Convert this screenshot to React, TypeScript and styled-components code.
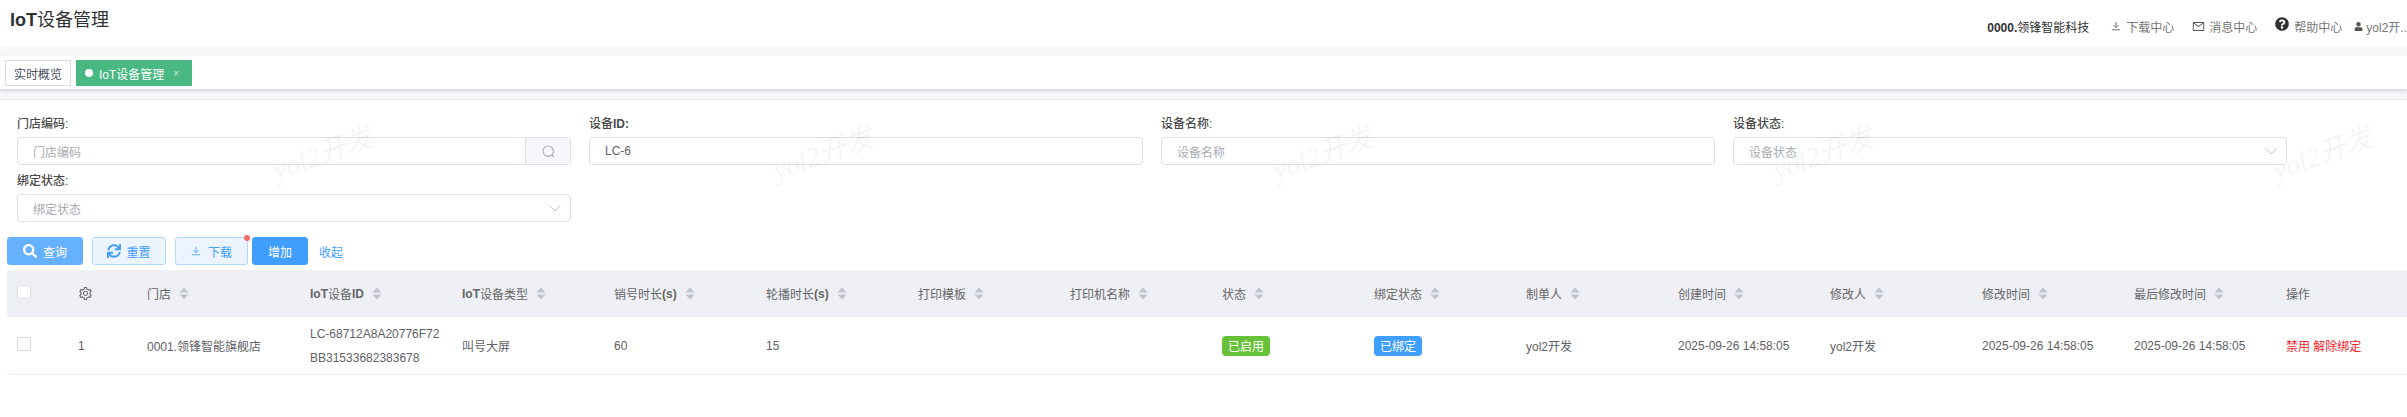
import React from "react";
import styled, { createGlobalStyle } from "styled-components";
import { FaSearch, FaSync, FaUser, FaQuestionCircle } from "react-icons/fa";
import { AiOutlineMail, AiOutlineSetting } from "react-icons/ai";

const Global = createGlobalStyle`
  html, body { margin: 0; padding: 0; background: #fff; }
  body { width: 2407px; height: 417px; overflow: hidden; font-family: "Liberation Sans", "Noto Sans CJK SC", sans-serif; font-size: 12px; color: #606266; }
  * { box-sizing: border-box; }
`;

const Page = styled.div`position: relative; width: 2407px; height: 417px; overflow: hidden;`;

const TopBar = styled.header`display: flex; align-items: center; justify-content: space-between; height: 46px; padding: 0 0 6px 10px; background: #fff;`;
const Title = styled.h1`margin: 0; font-size: 18px; font-weight: 400; color: #303133; line-height: 28px; b { font-weight: 700; }`;
const TopRight = styled.nav`display: flex; align-items: center; font-size: 12px; color: #777; padding-top: 12px; white-space: nowrap;`;
const Company = styled.span`color: #333; margin-right: 22px; b { font-weight: 700; }`;
const TopLink = styled.span<{ $gap: number; $iconGap: number }>`display: inline-flex; align-items: center; gap: ${p => p.$iconGap}px; margin-right: ${p => p.$gap}px; svg { color: #555; flex: none; }`;
const HelpIcon = styled(FaQuestionCircle)`margin-top: -4px; && { color: #303133; }`;

const TabStrip = styled.div`height: 10px; background: #f7f8fa;`;
const TabBar = styled.div`display: flex; gap: 5px; height: 33px; padding: 4px 5px 3px; background: #fff; box-shadow: 0 2px 4px rgba(0,21,41,.16); position: relative;`;
const Tab = styled.div`display: flex; align-items: center; height: 26px; padding: 0 8px; border: 1px solid #d8dce5; color: #495060;`;
const ActiveTab = styled.div`display: flex; align-items: center; height: 26px; padding: 0 0 0 9px; width: 116px; background: #4ab883; color: #fff;`;
const Dot = styled.i`width: 8px; height: 8px; border-radius: 50%; background: #fff; margin-right: 6px;`;
const Close = styled.span`margin-left: 9px; font-size: 10px; opacity: .7;`;
const Gap = styled.div`height: 11px; background: #f7f8fa; border-bottom: 1px solid #e6ebf5;`;

const Form = styled.form`display: grid; grid-template-columns: repeat(4, 554px); column-gap: 18px; padding: 16px 0 0 17px;`;
const Field = styled.div`height: 57px; display: flex; flex-direction: column;`;
const Label = styled.label`height: 21px; line-height: 14px; margin-top: 1px; margin-bottom: -1px; color: #4a4a4a; font-weight: 500; b { font-weight: 700; }`;
const Box = styled.div`display: flex; align-items: center; justify-content: space-between; height: 28px; border: 1px solid #dcdfe6; border-radius: 4px; background: #fff; overflow: hidden;`;
const Value = styled.span<{ $placeholder?: boolean }>`padding-left: 15px; color: ${p => (p.$placeholder ? "#a8abb2" : "#606266")};`;
const Addon = styled.span`display: flex; align-items: center; justify-content: center; width: 45px; height: 100%; background: #f5f7fa; border-left: 1px solid #dcdfe6; color: #909399;`;
const Chevron = styled.svg`margin-right: 9px; flex: none;`;

const Actions = styled.div`display: flex; align-items: center; height: 28px; margin-top: 7px; padding-left: 7px;`;
const Btn = styled.button<{ $w: number; $kind: "solid" | "light" | "primary"; $mr: number; $gap?: number }>`
  position: relative; display: inline-flex; align-items: center; justify-content: center; gap: ${p => p.$gap ?? 6}px;
  width: ${p => p.$w}px; height: 28px; margin-right: ${p => p.$mr}px; padding: 0; border-radius: 3px; font: inherit; font-size: 12px;
  background: ${p => (p.$kind === "solid" ? "#66b1ff" : p.$kind === "primary" ? "#409eff" : "#ecf5ff")};
  border: 1px solid ${p => (p.$kind === "light" ? "#b3d8ff" : p.$kind === "solid" ? "#66b1ff" : "#409eff")};
  color: ${p => (p.$kind === "light" ? "#409eff" : "#fff")};
`;
const Badge = styled.i`position: absolute; top: -3px; right: -3px; width: 6px; height: 6px; border-radius: 50%; background: #f56c6c;`;
const TextLink = styled.span`margin-left: 3px; color: #409eff;`;

const Table = styled.div`margin: 5px 0 0 7px; width: 2400px;`;
const Row = styled.div<{ $head?: boolean }>`
  display: grid; grid-template-columns: 61px 69px 163px repeat(13, 152px) 124px; align-items: center;
  height: ${p => (p.$head ? "47px" : "58px")};
  background: ${p => (p.$head ? "#eef0f5" : "#fff")};
  border-bottom: ${p => (p.$head ? "none" : "1px solid #ebeef5")};
  color: ${p => (p.$head ? "#666" : "#606266")};
`;
const Cell = styled.div`display: flex; align-items: center; padding-left: 10px; min-width: 0; white-space: nowrap; b { font-weight: 700; }`;
const Check = styled.span`display: block; width: 14px; height: 14px; border: 1px solid #dcdfe6; border-radius: 2px; background: #fff; margin-top: -3px;`;
const Stack = styled.div`display: flex; flex-direction: column; gap: 8px; line-height: 16px;`;
const Tag = styled.span<{ $color: string }>`display: inline-flex; align-items: center; justify-content: center; width: 48px; height: 20px; border-radius: 4px; background: ${p => p.$color}; color: #fff;`;
const Danger = styled.span`color: #f5222d;`;
const SortIcon = styled.svg`margin-left: 8px; flex: none;`;

const Watermark = styled.div<{ $x: number }>`
  position: absolute; top: 139px; left: ${p => p.$x}px; pointer-events: none;
  font-family: "Liberation Serif", "Noto Sans CJK SC", serif; font-size: 28px; font-style: italic; line-height: 30px; white-space: nowrap;
  color: rgba(130,130,140,.09); transform: rotate(-20deg);
`;

const Sort = () => (
  <SortIcon width="10" height="13" viewBox="0 0 10 13" aria-hidden="true">
    <path d="M5 0.5 L9.5 5.5 H0.5 Z M0.5 7.5 H9.5 L5 12.5 Z" fill="#c0c4cc" />
  </SortIcon>
);

const DownloadIcon = ({ size }: { size: number }) => (
  <svg width={size} height={size} viewBox="0 0 12 12" fill="none" stroke="currentColor" strokeWidth="1" aria-hidden="true">
    <path d="M6 1 V7.5 M3 5 L6 8 L9 5 M1 10.5 H11" />
  </svg>
);

const SearchLine = () => (
  <svg width="13" height="13" viewBox="0 0 13 13" fill="none" stroke="#a8abb2" strokeWidth="1.1" aria-hidden="true">
    <circle cx="6.2" cy="6.2" r="5.2" />
    <path d="M9.8 10 L11.8 12" />
  </svg>
);

const ChevronIcon = () => (
  <Chevron width="12" height="7" viewBox="0 0 12 7" fill="none" stroke="#c0c4cc" strokeWidth="1" aria-hidden="true">
    <path d="M0.5 0.5 L6 6 L11.5 0.5" />
  </Chevron>
);

const heads: [React.ReactNode, boolean][] = [
  [<><b>IoT</b>设备<b>ID</b></>, true],
  [<><b>IoT</b>设备类型</>, true],
  [<>销号时长<b>(s)</b></>, true],
  [<>轮播时长<b>(s)</b></>, true],
  ["打印模板", true],
  ["打印机名称", true],
  ["状态", true],
  ["绑定状态", true],
  ["制单人", true],
  ["创建时间", true],
  ["修改人", true],
  ["修改时间", true],
  ["最后修改时间", true],
  ["操作", false],
];

const stamp = "2025-09-26 14:58:05";

export default function App() {
  return (
    <Page>
      <Global />
      <TopBar>
        <Title><b>IoT</b>设备管理</Title>
        <TopRight>
          <Company><b>0000.</b>领锋智能科技</Company>
          <TopLink $gap={18} $iconGap={5}><DownloadIcon size={10} />下载中心</TopLink>
          <TopLink $gap={18} $iconGap={4}><AiOutlineMail size={13} />消息中心</TopLink>
          <TopLink $gap={12} $iconGap={5}><HelpIcon size={14} />帮助中心</TopLink>
          <TopLink $gap={0} $iconGap={3}><FaUser size={9} />yol2开..</TopLink>
        </TopRight>
      </TopBar>
      <TabStrip />
      <TabBar>
        <Tab>实时概览</Tab>
        <ActiveTab><Dot /><span>IoT设备管理</span><Close>×</Close></ActiveTab>
      </TabBar>
      <Gap />
      <Form>
        <Field>
          <Label>门店编码:</Label>
          <Box><Value $placeholder>门店编码</Value><Addon><SearchLine /></Addon></Box>
        </Field>
        <Field>
          <Label>设备<b>ID:</b></Label>
          <Box><Value>LC-6</Value></Box>
        </Field>
        <Field>
          <Label>设备名称:</Label>
          <Box><Value $placeholder>设备名称</Value></Box>
        </Field>
        <Field>
          <Label>设备状态:</Label>
          <Box><Value $placeholder>设备状态</Value><ChevronIcon /></Box>
        </Field>
        <Field>
          <Label>绑定状态:</Label>
          <Box><Value $placeholder>绑定状态</Value><ChevronIcon /></Box>
        </Field>
      </Form>
      <Actions>
        <Btn type="button" $w={76} $kind="solid" $mr={9}><FaSearch size={14} />查询</Btn>
        <Btn type="button" $w={74} $kind="light" $mr={9} $gap={5}><FaSync size={14} />重置</Btn>
        <Btn type="button" $w={73} $kind="light" $mr={4} $gap={7}><DownloadIcon size={10} />下载<Badge /></Btn>
        <Btn type="button" $w={56} $kind="primary" $mr={8}>增加</Btn>
        <TextLink>收起</TextLink>
      </Actions>
      <Table>
        <Row $head>
          <Cell><Check /></Cell>
          <Cell><AiOutlineSetting size={15} color="#666" /></Cell>
          <Cell>门店<Sort /></Cell>
          {heads.map(([h, s], i) => <Cell key={i}>{h}{s && <Sort />}</Cell>)}
        </Row>
        <Row>
          <Cell><Check /></Cell>
          <Cell>1</Cell>
          <Cell>0001.领锋智能旗舰店</Cell>
          <Cell><Stack><span>LC-68712A8A20776F72</span><span>BB31533682383678</span></Stack></Cell>
          <Cell>叫号大屏</Cell>
          <Cell>60</Cell>
          <Cell>15</Cell>
          <Cell />
          <Cell />
          <Cell><Tag $color="#67c23a">已启用</Tag></Cell>
          <Cell><Tag $color="#409eff">已绑定</Tag></Cell>
          <Cell>yol2开发</Cell>
          <Cell>{stamp}</Cell>
          <Cell>yol2开发</Cell>
          <Cell>{stamp}</Cell>
          <Cell>{stamp}</Cell>
          <Cell><Danger>禁用 解除绑定</Danger></Cell>
        </Row>
      </Table>
      {[271, 771, 1271, 1771, 2271].map(x => <Watermark key={x} $x={x}>yol2开发</Watermark>)}
    </Page>
  );
}
